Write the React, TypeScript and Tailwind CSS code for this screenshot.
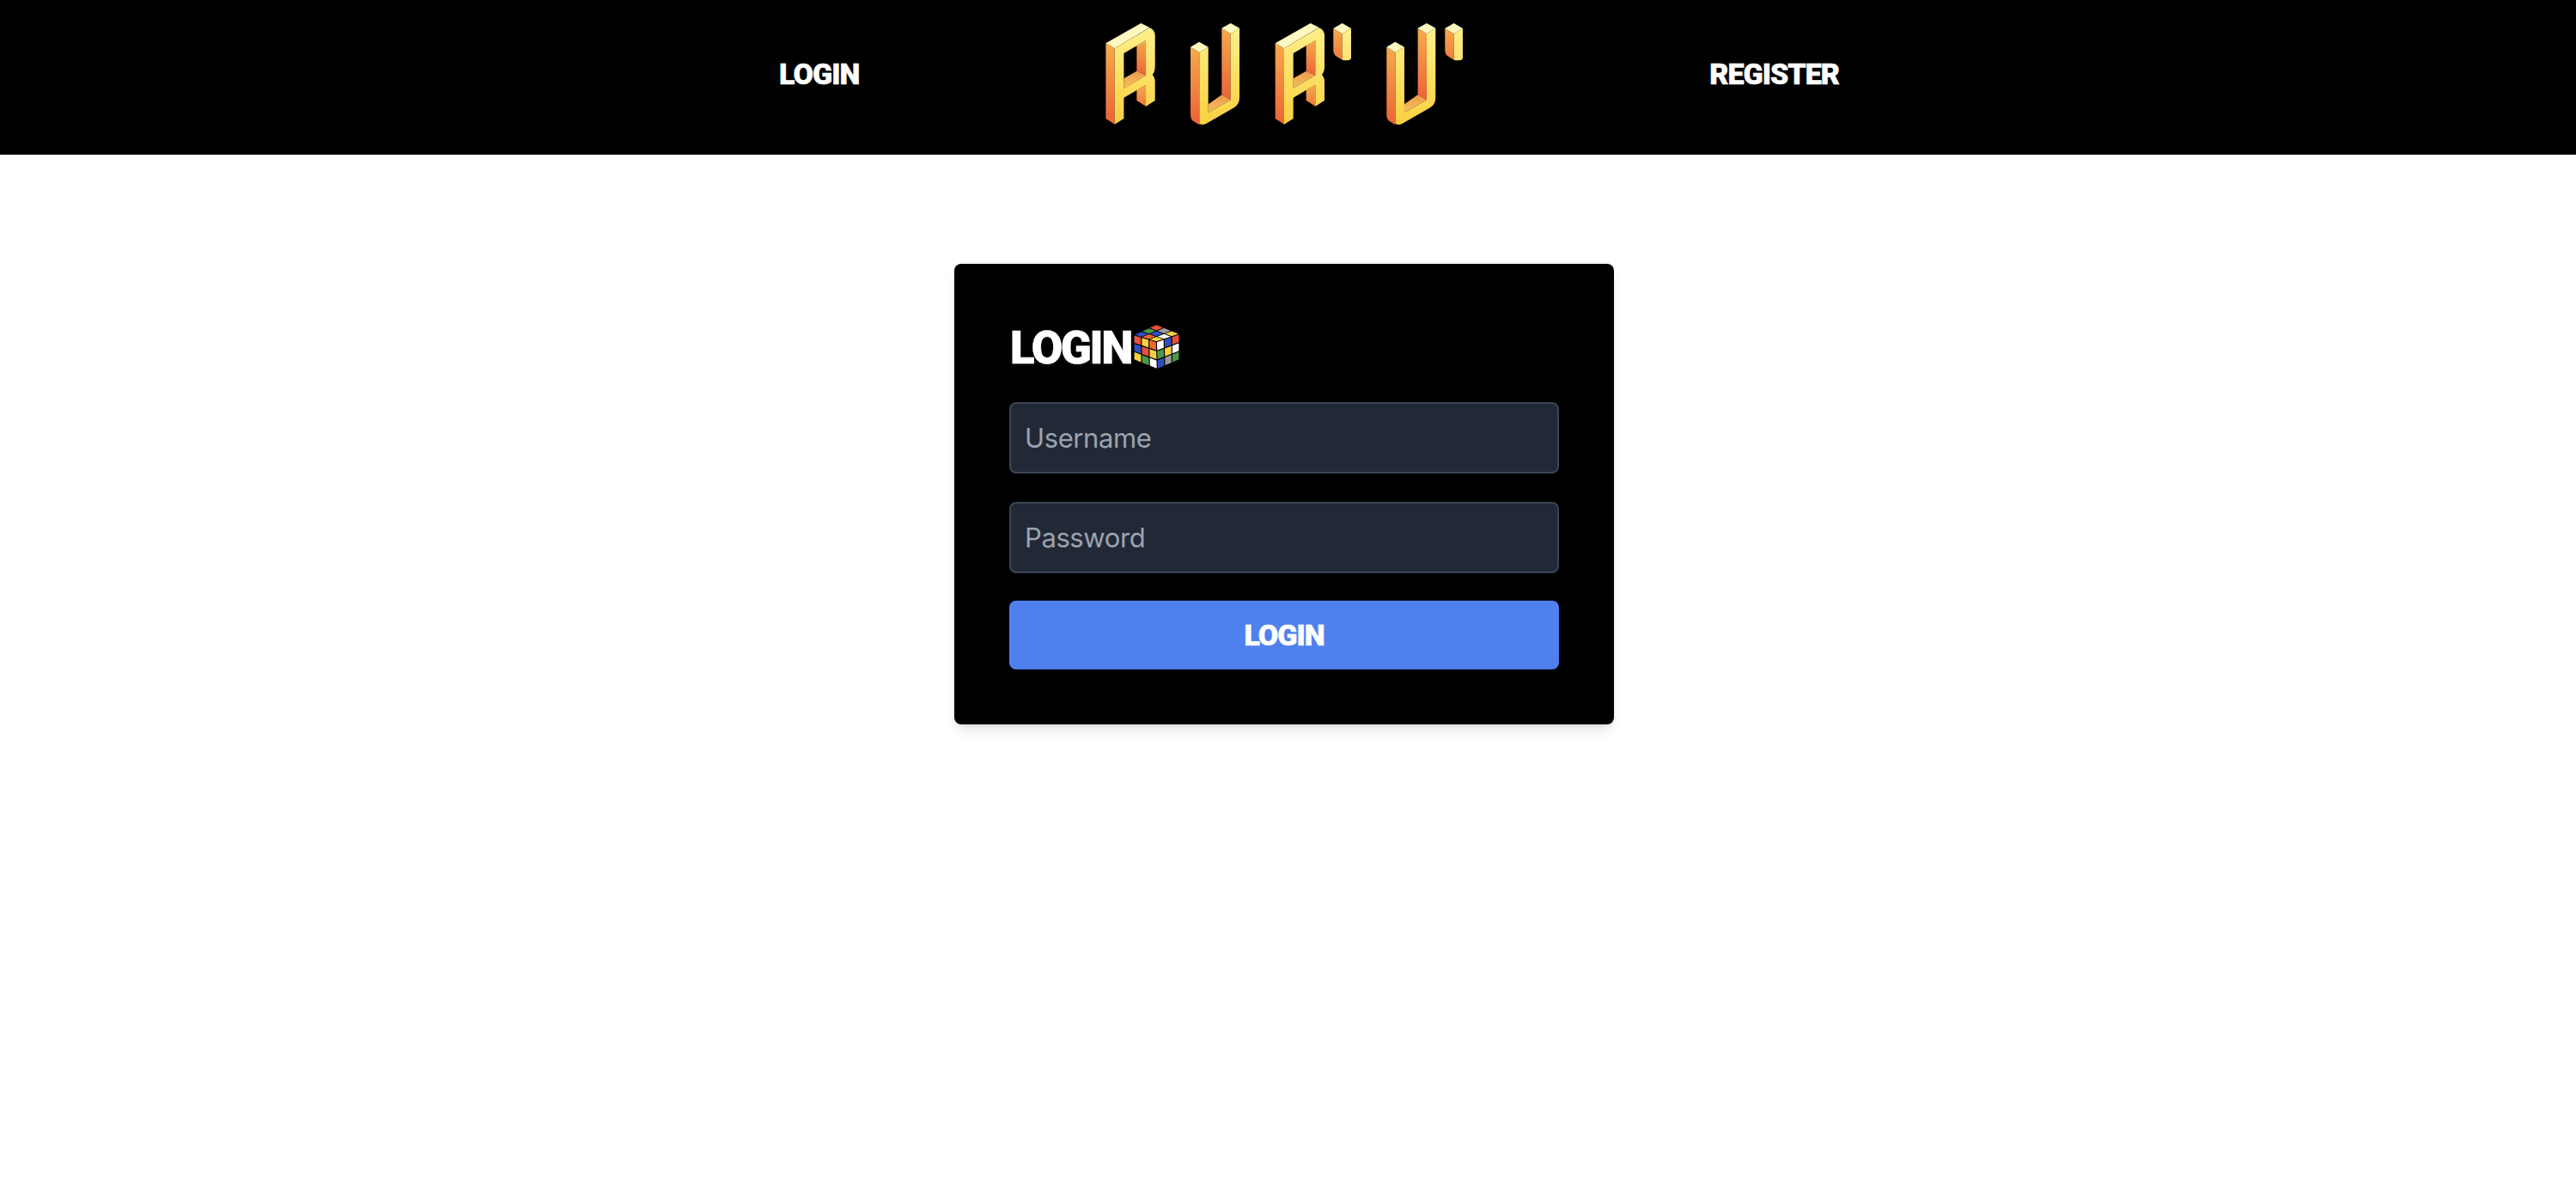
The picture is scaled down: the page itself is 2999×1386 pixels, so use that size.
const grad = (id: string, c1: string, c2: string) => (
  <linearGradient id={id} x1="0" y1="0" x2="0" y2="1">
    <stop offset="0" stopColor={c1} />
    <stop offset="1" stopColor={c2} />
  </linearGradient>
);

function LetterR({ x }: { x: number }) {
  return (
    <g transform={`translate(${x} 0)`}>
      <path d="M190 133L222 115V237L190 222Z" fill="url(#side)" />
      <path d="M190 288L222 270V345L190 325Z" fill="url(#sideSoft)" />
      <path d="M145 248L190 222L222 237L145 282Z" fill="url(#floor)" />
      <path d="M82 125L113 143V408L82 388Z" fill="url(#side)" />
      <path d="M82 125L205 55L235 70L113 143Z" fill="#fff7c0" />
      <path d="M113 143L235 71Q254 78 254 100V205Q254 225 245 235Q254 245 254 260V325L222 345V270L145 315V388L113 408ZM145 160V282L222 237V115Z" fillRule="evenodd" fill="url(#front)" />
    </g>
  );
}

function LetterU({ x }: { x: number }) {
  return (
    <g transform={`translate(${x} 0)`}>
      <path d="M487 72L518 92V323L487 305Z" fill="url(#side)" />
      <path d="M440 338L487 305L518 323L440 367Z" fill="url(#floor)" />
      <path d="M378 138L409 157V410Q395 402 385 395Q378 388 378 372Z" fill="url(#side)" />
      <path d="M378 138L408 120L440 138L409 157Z" fill="#fff7c0" />
      <path d="M487 72L518 55L549 72L518 92Z" fill="#fff7c0" />
      <path d="M409 157L440 138V367L518 323V92L549 72V315Q549 338 530 350L432 406Q420 412 409 406Z" fill="url(#front)" />
    </g>
  );
}

function Prime({ x }: { x: number }) {
  return (
    <g transform={`translate(${x} 0)`}>
      <path d="M877 73L908 92V183Q890 172 884 168Q877 162 877 150Z" fill="url(#sideSoft)" />
      <path d="M877 73L908 55L939 73L908 92Z" fill="#fff7c0" />
      <path d="M908 92L939 73V175Q939 185 925 185Q915 185 908 183Z" fill="url(#frontSoft)" />
    </g>
  );
}

function Logo() {
  return (
    <svg viewBox="60 40 1290 385" width="430" height="128.3" className="block shrink-0 mx-[-3px]">
      <defs>
        {grad("side", "#f5ab4b", "#ec6238")}
        {grad("sideSoft", "#f5ab4b", "#ee7a3e")}
        {grad("front", "#fff08a", "#f9d040")}
        {grad("frontSoft", "#fff08a", "#fde272")}
        {grad("floor", "#ee9a4a", "#f5c060")}
      </defs>
      <LetterR x={0} />
      <LetterU x={0} />
      <LetterR x={592} />
      <Prime x={0} />
      <LetterU x={685} />
      <Prime x={390} />
    </svg>
  );
}

type P = [number, number];
const lerp = (a: P, b: P, t: number): P => [a[0] + (b[0] - a[0]) * t, a[1] + (b[1] - a[1]) * t];
const bil = (a: P, b: P, c: P, d: P, u: number, v: number) => lerp(lerp(a, b, u), lerp(d, c, u), v);

function Face({ q, colors }: { q: [P, P, P, P]; colors: string[] }) {
  const gap = 0.022;
  return (
    <>
      {colors.map((fill, i) => {
        const col = i % 3;
        const row = Math.floor(i / 3);
        const u0 = col / 3 + gap;
        const u1 = (col + 1) / 3 - gap;
        const v0 = row / 3 + gap;
        const v1 = (row + 1) / 3 - gap;
        const pts = [
          bil(...q, u0, v0),
          bil(...q, u1, v0),
          bil(...q, u1, v1),
          bil(...q, u0, v1),
        ];
        return <polygon key={i} points={pts.map((p) => p.join(",")).join(" ")} fill={fill} />;
      })}
    </>
  );
}

const R = "#e8503a", Y = "#f7d23c", O = "#f0692a", B = "#2f4fc0", G = "#4b9a48", W = "#ffffff", S = "#9a9a9a";

function Cube() {
  return (
    <svg viewBox="500 50 165 162" width="55" height="54" className="block shrink-0">
      <Face q={[[582, 52], [662, 85], [582, 112], [503, 88]]} colors={[R, S, Y, G, B, W, B, O, Y]} />
      <Face q={[[503, 88], [582, 112], [585, 208], [503, 175]]} colors={[R, Y, O, B, R, Y, Y, G, W]} />
      <Face q={[[582, 112], [662, 85], [662, 175], [585, 208]]} colors={[W, B, R, G, Y, W, B, S, G]} />
    </svg>
  );
}

const display = "font-['Roboto',sans-serif] font-black text-white uppercase";
const small = "text-[34px] leading-none tracking-[-1px] [-webkit-text-stroke:0.5px_white]";
const field = "w-full h-[83px] bg-[#222936] border-2 border-[#3b4555] rounded-lg px-[16px] text-[31px] tracking-[-0.4px] font-['Inter',sans-serif] placeholder:text-[#9ca3af] outline-none";

export default function App() {
  return (
    <div className="min-h-[1386px] bg-white font-['Inter',sans-serif]">
      <header className="h-[180px] bg-black flex items-center justify-center gap-[283px] pl-[49px] pb-[8px]">
        <a className={`${display} ${small}`}>Login</a>
        <Logo />
        <a className={`${display} ${small}`}>Register</a>
      </header>
      <main className="flex justify-center pt-[127px] pr-[9px]">
        <form className="w-[768px] h-[536px] bg-black rounded-lg px-[64px] pt-[70px] shadow-lg flex flex-col">
          <div className="flex items-center h-[54px]">
            <h1 className={`${display} text-[53px] leading-none tracking-[-2.4px] ml-[1px] mr-[2px] mt-[2px] [-webkit-text-stroke:0.5px_white]`}>Login</h1>
            <Cube />
          </div>
          <input placeholder="Username" className={`mt-[37px] ${field}`} />
          <input placeholder="Password" className={`mt-[33px] ${field}`} />
          <button type="button" className={`${display} ${small} mt-[32px] w-full h-[80px] bg-[#4f81ee] rounded-lg`}>Login</button>
        </form>
      </main>
    </div>
  );
}
